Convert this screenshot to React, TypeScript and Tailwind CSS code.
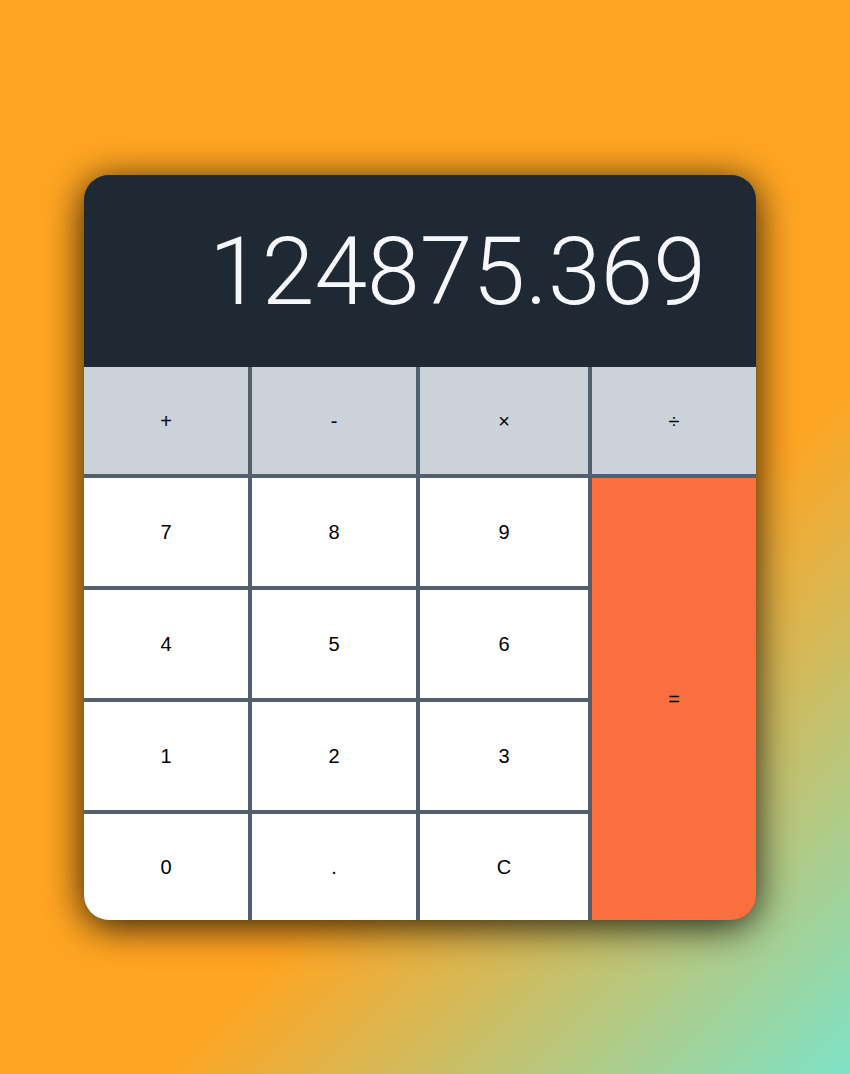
import React from "react";

const Btn = ({ label, className = "" }: { label: string; className?: string }) => (
  <div
    className={`flex items-center justify-center text-[20px] text-black ${className}`}
    style={{ fontFamily: '"Liberation Sans", Arial, sans-serif' }}
  >
    {label}
  </div>
);

export default function App() {
  return (
    <div className="w-[850px] h-[1074px] bg-[linear-gradient(135deg,#ffa522_0%,#ffa522_64%,#7ee3c7_100%)] pt-[175px] pl-[84px]">
      <div className="w-[672px] rounded-[25px] overflow-hidden bg-[#52606d] shadow-[0_6px_38px_rgba(0,0,0,0.85)]">
        <div
          className="h-[192px] bg-[#1f2933] flex items-center justify-end pr-[50px] text-[95px] font-light text-[#f5f7fa] leading-none"
          style={{ fontFamily: 'Roboto, "Noto Sans", sans-serif' }}
        >
          124875.369
        </div>
        <div className="grid grid-cols-[164px_164px_168px_164px] grid-rows-[107px_108px_108px_108px_106px] gap-x-[4px] gap-y-[4px]">
          <Btn label="+" className="bg-[#cbd2d9]" />
          <Btn label="-" className="bg-[#cbd2d9]" />
          <Btn label="×" className="bg-[#cbd2d9]" />
          <Btn label="÷" className="bg-[#cbd2d9]" />
          <Btn label="7" className="bg-white" />
          <Btn label="8" className="bg-white" />
          <Btn label="9" className="bg-white" />
          <Btn label="=" className="bg-[#f9703e] row-span-4" />
          <Btn label="4" className="bg-white" />
          <Btn label="5" className="bg-white" />
          <Btn label="6" className="bg-white" />
          <Btn label="1" className="bg-white" />
          <Btn label="2" className="bg-white" />
          <Btn label="3" className="bg-white" />
          <Btn label="0" className="bg-white" />
          <Btn label="." className="bg-white" />
          <Btn label="C" className="bg-white" />
        </div>
      </div>
    </div>
  );
}
